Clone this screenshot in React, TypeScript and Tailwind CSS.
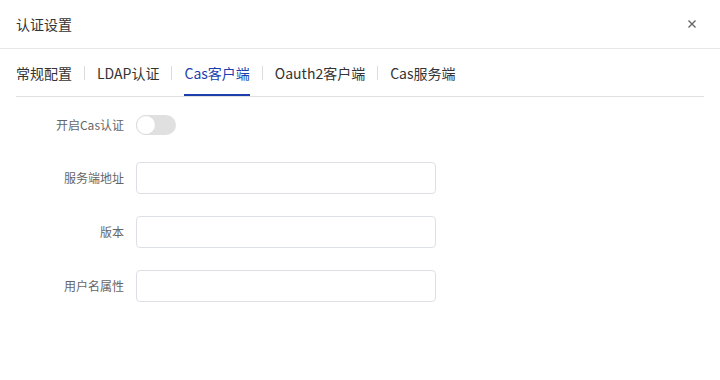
import { useState } from 'react';

const TABS = ['常规配置', 'LDAP认证', 'Cas客户端', 'Oauth2客户端', 'Cas服务端'];

const FIELDS = ['服务端地址', '版本', '用户名属性'];

export default function App() {
  const [active, setActive] = useState(2);
  const [enabled, setEnabled] = useState(false);

  return (
    <div
      className="w-[720px] h-[380px] bg-white text-[#333]"
      style={{ fontFamily: '"Noto Sans CJK SC", "Noto Sans", sans-serif' }}
    >
      <div className="h-[49px] flex items-center justify-between pl-4 pr-6 border-b border-[#e8e8e8]">
        <span className="text-sm text-[#333]">认证设置</span>
        <button className="text-[#666]">
          <svg width="8" height="8" viewBox="0 0 8 8" stroke="currentColor" strokeWidth="1.4">
            <path d="M0.5 0.5L7.5 7.5M7.5 0.5L0.5 7.5" />
          </svg>
        </button>
      </div>

      <div className="mx-4 flex items-center h-[48px] border-b border-[#e0e0e0]">
        {TABS.map((tab, i) => (
          <div key={tab} className="flex items-center h-full">
            {i > 0 && <span className="w-px h-[14px] bg-[#dcdcdc] mx-3" />}
            <button
              onClick={() => setActive(i)}
              className={`h-full text-sm border-b-2 pt-[2px] ${
                i === active ? 'text-[#1d3fae] border-[#1d3fae]' : 'text-[#333] border-transparent'
              }`}
            >
              {tab}
            </button>
          </div>
        ))}
      </div>

      <div className="pt-[18px]">
        <div className="flex items-center h-5">
          <label className="w-[124px] text-right text-xs text-[#666]">开启Cas认证</label>
          <button
            onClick={() => setEnabled(!enabled)}
            className={`ml-3 w-10 h-5 rounded-full relative ${enabled ? 'bg-[#1d3fae]' : 'bg-[#e0e0e0]'}`}
          >
            <span
              className={`absolute top-0 w-5 h-5 rounded-full bg-white border border-[#dcdcdc] ${
                enabled ? 'left-5' : 'left-0'
              }`}
            />
          </button>
        </div>

        <div className="mt-[27px] flex flex-col gap-[22px]">
          {FIELDS.map((f) => (
            <div key={f} className="flex items-center">
              <label className="w-[124px] text-right text-xs text-[#666]">{f}</label>
              <input className="ml-3 w-[300px] h-8 rounded border border-[#dcdfe6] px-3 text-xs outline-none focus:border-[#1d3fae]" />
            </div>
          ))}
        </div>
      </div>
    </div>
  );
}
